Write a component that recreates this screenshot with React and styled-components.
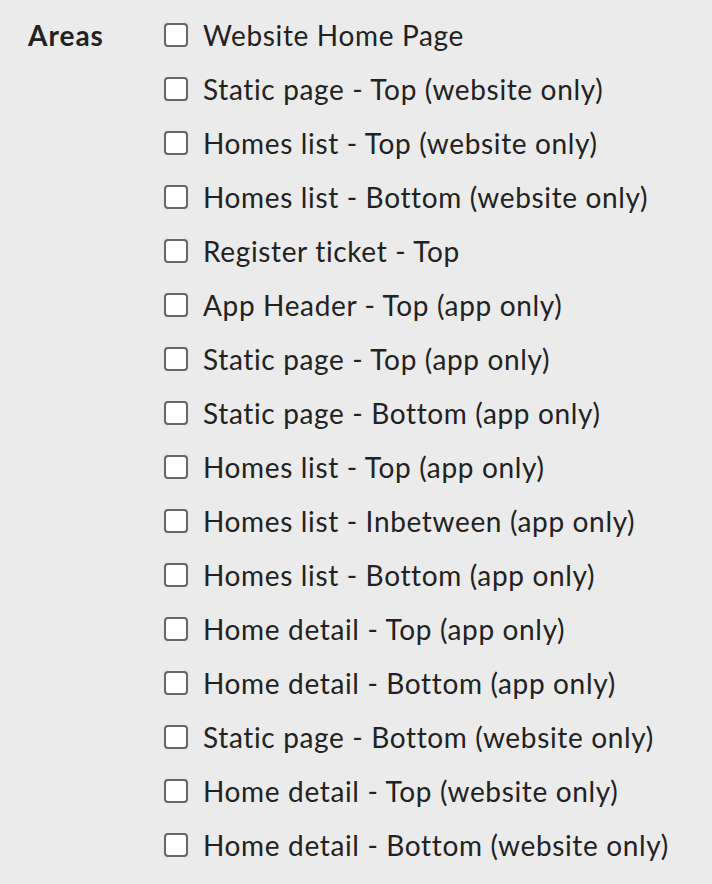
import React from 'react'
import styled, { createGlobalStyle } from 'styled-components'

const GlobalStyle = createGlobalStyle`
    html, body {
        margin: 0;
        background: #ebebeb;
    }
    body {
        font-family: Lato, "Open Sans", sans-serif;
        color: #222;
    }
`;

const Field = styled.div`
    display: grid;
    grid-template-columns: 136px 1fr;
    padding: 8px 0 0 28px;
`;

const Label = styled.div`
    font-weight: bold;
    font-size: 28px;
    letter-spacing: 1px;
    line-height: 54px;
    height: 54px;
`;

const Options = styled.div`
    display: flex;
    flex-direction: column;
`;

const Option = styled.label`
    display: flex;
    align-items: center;
    gap: 15px;
    height: 54px;
    font-size: 28px;
    letter-spacing: 0.65px;
    cursor: pointer;
`;

const Box = styled.span`
    width: 20px;
    height: 20px;
    border: 2px solid #666;
    border-radius: 4px;
    background: #fff;
    flex-shrink: 0;
`;

const areas = [
    'Website Home Page',
    'Static page - Top (website only)',
    'Homes list - Top (website only)',
    'Homes list - Bottom (website only)',
    'Register ticket - Top',
    'App Header - Top (app only)',
    'Static page - Top (app only)',
    'Static page - Bottom (app only)',
    'Homes list - Top (app only)',
    'Homes list - Inbetween (app only)',
    'Homes list - Bottom (app only)',
    'Home detail - Top (app only)',
    'Home detail - Bottom (app only)',
    'Static page - Bottom (website only)',
    'Home detail - Top (website only)',
    'Home detail - Bottom (website only)',
];

function App () {
    return (
        <>
            <GlobalStyle />
            <Field>
                <Label>Areas</Label>
                <Options>
                    {areas.map((area) => (
                        <Option key={area}>
                            <Box />
                            {area}
                        </Option>
                    ))}
                </Options>
            </Field>
        </>
    );
}

export default App;
